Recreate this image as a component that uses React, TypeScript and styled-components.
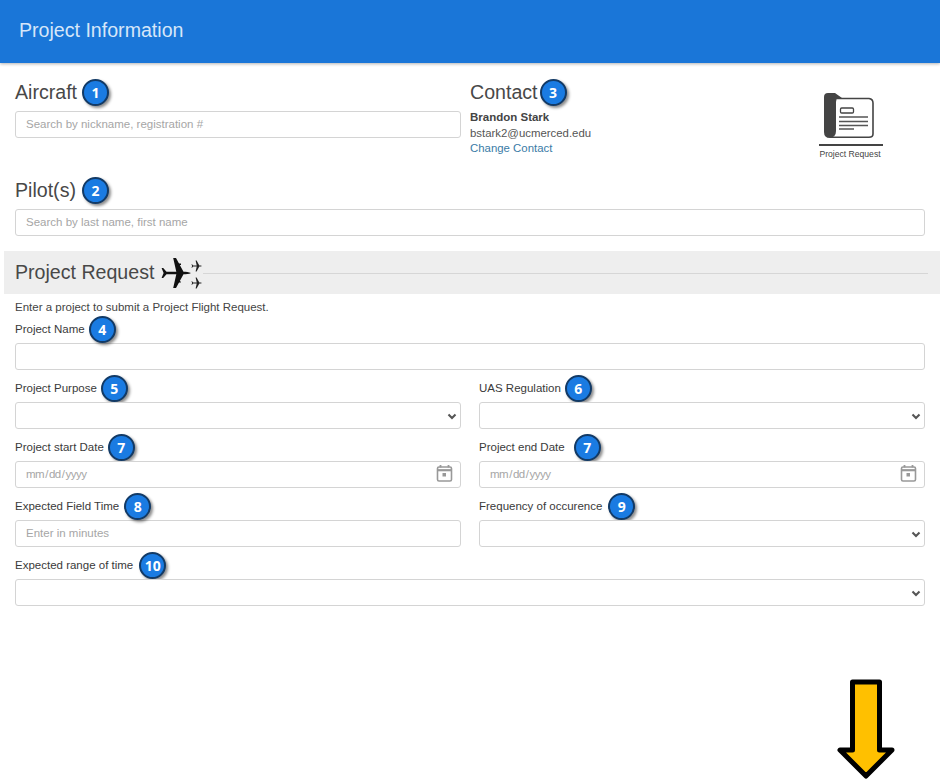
import type { ReactNode } from 'react';
import styled, { createGlobalStyle } from 'styled-components';

const GlobalStyle = createGlobalStyle`
  html, body {
    margin: 0;
    padding: 0;
    background: #fff;
    font-family: "Liberation Sans", Arial, sans-serif;
    color: #444;
  }
`;

const Page = styled.div`
  position: relative;
  width: 940px;
  height: 783px;
  overflow: hidden;
`;

const Header = styled.header`
  box-sizing: border-box;
  height: 63px;
  padding: 0 0 2px 19px;
  display: flex;
  align-items: center;
  background-color: #1a76d8;
  box-shadow: 0 1px 3px rgba(0, 0, 0, .3);
  color: #d6e6f9;
  font-size: 19.6px;
`;

const TopRow = styled.div`
  display: flex;
  height: 84px;
  margin-top: 15px;
  padding-left: 15px;
`;

const AircraftColumn = styled.div`
  width: 446px;
  margin-right: 9px;
`;

const ContactColumn = styled.div`
  flex: 1;
`;

const HeadingRow = styled.div`
  display: flex;
  align-items: center;
  height: 28px;
`;

const Heading = styled.h2`
  margin: 0;
  font-size: 19.6px;
  font-weight: normal;
  color: #484848;
`;

const Badge = styled.span<{ $gap: number }>`
  box-sizing: border-box;
  flex: none;
  display: flex;
  align-items: center;
  justify-content: center;
  width: 27px;
  height: 27px;
  margin-left: ${p => p.$gap}px;
  border: 2px solid #123a66;
  border-radius: 50%;
  background-color: #1a7be2;
  box-shadow: 2px 2px 3px rgba(0, 0, 0, .45);
  color: #fff;
  font-family: "Open Sans", sans-serif;
  font-size: 14px;
  font-weight: 700;
`;

const ContactName = styled.div`
  margin-top: 4px;
  font-size: 11.5px;
  line-height: 15.5px;
  font-weight: bold;
`;

const ContactText = styled.div`
  font-size: 11.4px;
  line-height: 15.5px;
  color: #555;
`;

const ContactLink = styled.a`
  display: block;
  font-size: 11.4px;
  line-height: 15.5px;
  color: #3a7ba6;
`;

const RequestIcon = styled.div`
  flex: none;
  width: 64px;
  margin: 15px 57px 0 0;
  text-align: center;
  font-size: 8.6px;
  color: #444;
  svg { display: block; }
`;

const RequestCaption = styled.div`
  margin-top: 2px;
  padding-right: 2px;
  line-height: 10px;
  white-space: nowrap;
`;

const PilotSection = styled.section`
  margin: 14px 15px 0;
`;

const Input = styled.input<{ $mt?: number }>`
  box-sizing: border-box;
  display: block;
  width: 100%;
  height: 27px;
  margin-top: ${p => p.$mt ?? 1}px;
  padding: 0 10px 2px;
  border: 1px solid #d4d4d4;
  border-radius: 3px;
  background: #fff;
  font-family: inherit;
  font-size: 11.5px;
  color: #999;
  &::placeholder { color: #a6a6a6; opacity: 1; }
  &::-webkit-datetime-edit { color: #a6a6a6; letter-spacing: -.5px; padding: 0; margin-left: -1px; }
  &::-webkit-datetime-edit-fields-wrapper { padding: 0; }
  &::-webkit-calendar-picker-indicator { opacity: 0; }
`;

const Select = styled.select`
  box-sizing: border-box;
  display: block;
  width: 100%;
  height: 27px;
  margin-top: 1px;
  padding: 0 6px;
  appearance: none;
  border: 1px solid #d4d4d4;
  border-radius: 3px;
  background-color: #fff;
  font-family: inherit;
  font-size: 11.5px;
  color: #555;
`;

const ControlBox = styled.div`
  position: relative;
`;

const ControlIcon = styled.svg`
  position: absolute;
  right: 0;
  top: 0;
  pointer-events: none;
`;

const Band = styled.div`
  display: flex;
  align-items: center;
  height: 43px;
  margin: 15px 0 0 4px;
  padding: 0 12px 0 11px;
  background-color: #eeeeee;
  svg { flex: none; margin-left: 5px; }
`;

const BandRule = styled.div`
  flex: 1;
  height: 1px;
  margin-top: 2px;
  background-color: #d6d6d6;
`;

const Form = styled.div`
  padding: 5px 15px 0;
`;

const Intro = styled.p`
  margin: 0 0 1px;
  font-size: 11.5px;
  line-height: 16px;
`;

const FieldGrid = styled.div`
  display: grid;
  grid-template-columns: 446px 446px;
  column-gap: 18px;
  row-gap: 5px;
`;

const FieldWrap = styled.div<{ $wide?: boolean }>`
  grid-column: ${p => (p.$wide ? '1 / -1' : 'auto')};
`;

const LabelRow = styled.div`
  display: flex;
  align-items: center;
  height: 26px;
`;

const Label = styled.label`
  font-size: 11.5px;
  color: #3a3a3a;
`;

const ArrowOverlay = styled.svg`
  position: absolute;
  left: 836px;
  top: 678px;
`;

const PLANE =
  'M32 18C30 16.9 27 16.7 24.5 16.7L17 3H14.2L17.3 16.7H7.5L4.2 13H2.6L4.6 18L2.6 23H4.2L7.5 19.3H17.3L14.2 33H17L24.5 19.3C27 19.3 30 19.1 32 18Z';

const PlaneIcon = () => (
  <svg width="44" height="36" viewBox="0 0 44 36">
    <path d={PLANE} fill="#111" />
    <path d="M18 8.5h4v1.6h-3.2zM18 25.9h3.2l.8 1.6h-4z" fill="#111" />
    <g fill="#222" transform="translate(31.5 4.5) scale(.36)">
      <path d={PLANE} />
    </g>
    <g fill="#222" transform="translate(31.5 21.5) scale(.36)">
      <path d={PLANE} />
    </g>
  </svg>
);

const FolderIcon = () => (
  <svg width="64" height="54" viewBox="0 0 64 54">
    <path d="M5 4Q5 0 9 0H16L23 5H19Q17 6 17 9V38Q17 44 11 45Q5 45 5 39Z" fill="#444" />
    <path d="M18 5.5H50Q54 6 54 10V41Q54 44.3 50 44.3H11" fill="none" stroke="#444" strokeWidth="1.6" />
    <rect x="21.5" y="15" width="13" height="5" rx="1.2" fill="none" stroke="#444" strokeWidth="1.3" />
    <path d="M20 24H49M20 28.5H49M20 32.5H49M20 36H35" stroke="#555" strokeWidth="1.3" />
    <rect x="0" y="51" width="64" height="2" fill="#444" />
  </svg>
);

const DownArrow = () => (
  <ArrowOverlay width="60" height="102" viewBox="0 0 60 102">
    <path
      d="M16.5 4H43.5V72H56L30 98L4 72H16.5Z"
      fill="#ffc000"
      stroke="#000"
      strokeWidth="5"
      strokeLinejoin="round"
    />
  </ArrowOverlay>
);

const SelectControl = () => (
  <ControlBox>
    <Select />
    <ControlIcon width="28" height="28" viewBox="0 0 28 28">
      <path d="M15.5 12.5L19 16L22.5 12.5" fill="none" stroke="#555" strokeWidth="2.1" />
    </ControlIcon>
  </ControlBox>
);

const DateControl = () => (
  <ControlBox>
    <Input type="date" />
    <ControlIcon width="32" height="28" viewBox="0 0 32 28">
      <path
        d="M10 6H21A1.5 1.5 0 0 1 22.5 7.5V18.5A1.5 1.5 0 0 1 21 20H10A1.5 1.5 0 0 1 8.5 18.5V7.5A1.5 1.5 0 0 1 10 6Z"
        fill="none"
        stroke="#999"
        strokeWidth="1.6"
      />
      <path d="M8.5 9.2H22.5" stroke="#999" strokeWidth="2.2" />
      <path d="M11.5 4V6.5M19.5 4V6.5" stroke="#999" strokeWidth="1.8" />
      <rect x="13.5" y="12" width="3.5" height="3.5" fill="#999" />
    </ControlIcon>
  </ControlBox>
);

const Field = ({ label, badge, gap, wide, children }: { label: string; badge: string; gap: number; wide?: boolean; children: ReactNode }) => (
  <FieldWrap $wide={wide}>
    <LabelRow>
      <Label>{label}</Label>
      <Badge $gap={gap}>{badge}</Badge>
    </LabelRow>
    {children}
  </FieldWrap>
);

const App = () => (
  <Page>
    <GlobalStyle />
    <Header>Project Information</Header>

    <TopRow>
      <AircraftColumn>
        <HeadingRow>
          <Heading>Aircraft</Heading>
          <Badge $gap={5}>1</Badge>
        </HeadingRow>
        <Input $mt={5} placeholder="Search by nickname, registration #" />
      </AircraftColumn>
      <ContactColumn>
        <HeadingRow>
          <Heading>Contact</Heading>
          <Badge $gap={2}>3</Badge>
        </HeadingRow>
        <ContactName>Brandon Stark</ContactName>
        <ContactText>bstark2@ucmerced.edu</ContactText>
        <ContactLink>Change Contact</ContactLink>
      </ContactColumn>
      <RequestIcon>
        <FolderIcon />
        <RequestCaption>Project Request</RequestCaption>
      </RequestIcon>
    </TopRow>

    <PilotSection>
      <HeadingRow>
        <Heading>Pilot(s)</Heading>
        <Badge $gap={6}>2</Badge>
      </HeadingRow>
      <Input $mt={5} placeholder="Search by last name, first name" />
    </PilotSection>

    <Band>
      <Heading>Project Request</Heading>
      <PlaneIcon />
      <BandRule />
    </Band>

    <Form>
      <Intro>Enter a project to submit a Project Flight Request.</Intro>
      <FieldGrid>
        <Field label="Project Name" badge="4" gap={4} wide>
          <Input />
        </Field>
        <Field label="Project Purpose" badge="5" gap={4}>
          <SelectControl />
        </Field>
        <Field label="UAS Regulation" badge="6" gap={4}>
          <SelectControl />
        </Field>
        <Field label="Project start Date" badge="7" gap={4}>
          <DateControl />
        </Field>
        <Field label="Project end Date" badge="7" gap={9}>
          <DateControl />
        </Field>
        <Field label="Expected Field Time" badge="8" gap={5}>
          <Input placeholder="Enter in minutes" />
        </Field>
        <Field label="Frequency of occurence" badge="9" gap={6}>
          <SelectControl />
        </Field>
        <Field label="Expected range of time" badge="10" gap={6} wide>
          <SelectControl />
        </Field>
      </FieldGrid>
    </Form>

    <DownArrow />
  </Page>
);

export default App;
